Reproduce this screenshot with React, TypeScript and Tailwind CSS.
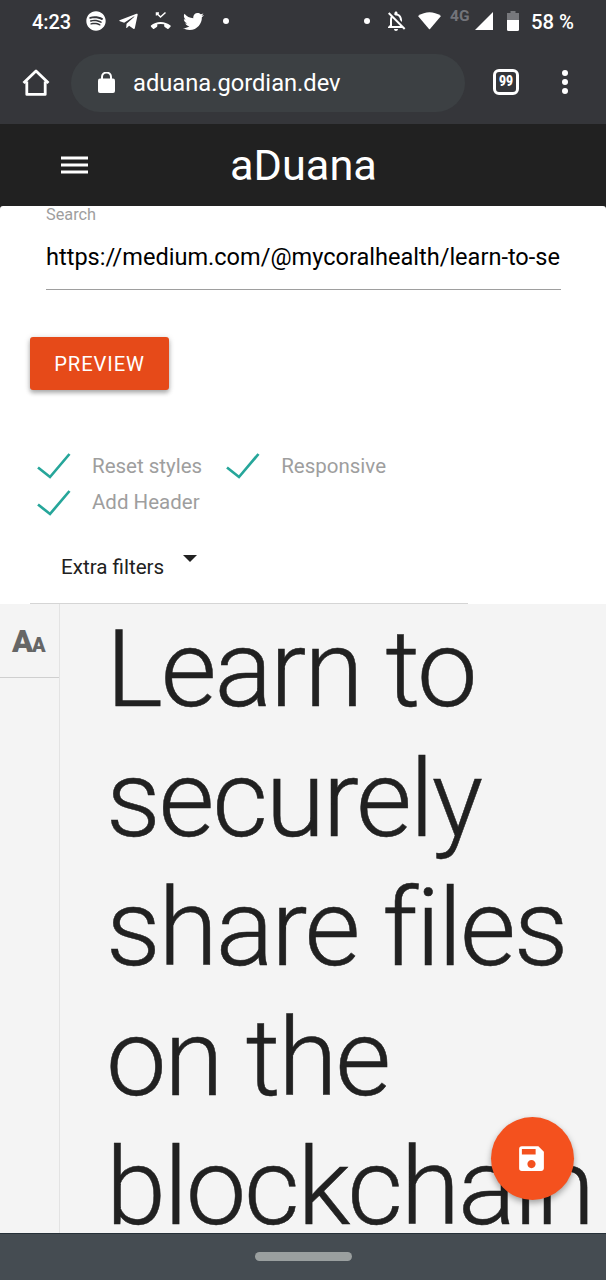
import type { ReactNode } from "react";
import { FaSpotify, FaTelegramPlane, FaTwitter } from "react-icons/fa";
import { MdOutlineNotificationsOff, MdSave } from "react-icons/md";

function StatusBar() {
  return (
    <div className="flex h-[42px] items-center text-[20px] leading-none font-medium whitespace-nowrap text-white">
      <span className="ml-8 w-[54px] translate-y-[0.5px] tracking-[-0.1px]">4:23</span>
      <FaSpotify className="size-5 shrink-0" />
      <FaTelegramPlane className="ml-3 size-[21px] shrink-0" />
      <svg className="ml-[11px] size-[22px] shrink-0" viewBox="0 0 22 22" fill="none">
        <path d="M6.500 5.500V3H9M6.500 3 10.500 7 15.500 2.500" stroke="currentColor" strokeWidth="1.500" />
        <path d="M1 15.600C6 10.800 15 10.800 20.500 15.600Q21 16.200 20.500 16.800L18.500 18.800Q17.900 19.200 17.300 18.800L14.700 17Q14.200 16.600 14.200 16V14.300Q10.700 13.500 7.300 14.300V16Q7.300 16.600 6.800 17L4.200 18.800Q3.600 19.200 3 18.800L1 16.800Q.5 16.200 1 15.600Z" fill="currentColor" />
      </svg>
      <FaTwitter className="ml-[11px] size-[21px] shrink-0" />
      <span className="ml-[19px] size-1.5 shrink-0 rounded-full bg-white" />
      <span className="ml-auto size-1.5 shrink-0 rounded-full bg-white" />
      <MdOutlineNotificationsOff className="ml-[14px] size-6 shrink-0" />
      <svg className="ml-[10px] h-[18px] w-[23px] shrink-0" viewBox="0 0 23 18" fill="currentColor">
        <path d="M0 4Q11.500-3.500 23 4L12 17Q11.500 17.500 11 17Z" />
      </svg>
      <span className="ml-[9px] w-[25px] -translate-y-1 text-[15.500px] font-bold text-[#73747a]">4G</span>
      <svg className="size-[18px] shrink-0" viewBox="0 0 18 18" fill="currentColor">
        <path d="M18 0V18H0Z" />
      </svg>
      <svg className="ml-[14px] h-5 w-3 shrink-0" viewBox="0 0 12 20">
        <path d="M3.500 0h5v2H12v8H0V2h3.500Z" fill="#77787c" />
        <path d="M0 9h12v9.500q0 1.500-1.500 1.500h-9Q0 20 0 18.500Z" fill="white" />
      </svg>
      <span className="mr-8 ml-3 w-[43px] translate-y-[0.5px] text-[20.300px]">58 %</span>
    </div>
  );
}

function AddressBar() {
  return (
    <div className="flex h-[82px] items-center text-white">
      <svg className="ml-[22px] size-7 shrink-0" viewBox="0 0 28 28" fill="none" stroke="currentColor" strokeWidth="2.800" strokeLinejoin="round">
        <path d="M1.500 14 14 2l12.500 12M4.800 12.500v12.900h18.400V12.500" />
      </svg>
      <div className="ml-[21px] flex h-[58px] w-[394px] items-center rounded-full bg-[#3c4043]">
        <svg className="ml-[27px] h-[22px] w-[17px] shrink-0" viewBox="0 0 17 22">
          <path d="M4 8V5a4.500 4.500 0 0 1 9 0V8" fill="none" stroke="white" strokeWidth="2" />
          <rect y="6.500" width="17" height="14.500" rx="2" fill="white" />
        </svg>
        <span className="ml-[18px] pt-[2px] text-[23.700px] leading-none">aduana.gordian.dev</span>
      </div>
      <span className="ml-7 flex size-[26px] -translate-y-px items-center justify-center rounded-[6px] border-[3px] border-white text-[15.500px] leading-none font-bold">
        <b className="scale-x-[0.78]">99</b>
      </span>
      <span className="ml-[43px] flex -translate-y-px flex-col gap-[3px]">
        <i className="size-1.5 rounded-full bg-white" />
        <i className="size-1.5 rounded-full bg-white" />
        <i className="size-1.5 rounded-full bg-white" />
      </span>
    </div>
  );
}

function Check({ children }: { children: ReactNode }) {
  return (
    <label className="flex h-[36.500px] items-center text-[20.500px] text-[#9e9e9e]">
      <svg className="mr-[21px] h-[26px] w-[34px] shrink-0" viewBox="0 0 34 26" fill="none" stroke="#26a69a" strokeWidth="2.700">
        <path d="M1 14.500 13 24 32.500 1" />
      </svg>
      {children}
    </label>
  );
}

function SearchForm() {
  return (
    <section className="flex h-[398px] flex-col rounded-t-[3px] bg-white">
      <label className="ml-[46px] h-[17px] text-[16.300px] leading-[17px] text-[#9e9e9e]">Search</label>
      <div className="ml-[46px] h-[67px] w-[515px] overflow-hidden border-b border-[#9e9e9e] text-[23.560px] leading-[68px] whitespace-nowrap text-black">
        https://medium.com/@mycoralhealth/learn-to-se
      </div>
      <button className="mt-[47px] ml-[30px] flex h-[53px] w-[139px] shrink-0 items-center justify-center rounded-[3px] bg-[#e64a19] pt-px text-[20.200px] tracking-[0.900px] text-white shadow-[0_3px_4px_rgba(0,0,0,0.25),0_1px_6px_rgba(0,0,0,0.16)]">
        PREVIEW
      </button>
      <div className="mt-[58px] ml-[37px] flex w-[420px] flex-wrap gap-x-[24px]">
        <Check>Reset styles</Check>
        <Check>Responsive</Check>
        <Check>Add Header</Check>
      </div>
      <div className="ml-[30px] flex w-[438px] flex-1 border-b border-[#d5d5d5] pl-[31px]">
        <span className="mt-[32px] h-7 w-[122px] text-[20.600px] leading-7 text-[#212121]">Extra filters</span>
        <svg className="mt-[34px] h-[7px] w-[14px]" viewBox="0 0 14 7">
          <path d="M0 0h14L7 7Z" fill="#212121" />
        </svg>
      </div>
    </section>
  );
}

function Preview() {
  return (
    <main className="flex h-[629px] overflow-hidden bg-[#f4f4f4]">
      <aside className="w-[60px] shrink-0 border-r border-[#e3e3e3]">
        <div className="flex h-[74px] items-baseline border-b border-[#cfcfcf] pt-[20px] pl-3 leading-none font-black text-[#666]">
          <span className="w-5 text-[31px] leading-[36px]">A</span>
          <span className="text-[20px] leading-none">A</span>
        </div>
      </aside>
      <h1 className="mt-[1px] ml-[46px] text-[108px] leading-[129.500px] font-light tracking-[-2.200px] whitespace-nowrap text-[#212121] [-webkit-text-stroke:0.5px_#212121]">
        Learn to<br />securely<br />share files<br />on the<br />blockchain
      </h1>
    </main>
  );
}

export default function App() {
  return (
    <div className="relative h-[1280px] w-[606px] overflow-hidden bg-[#212121] font-[Roboto,sans-serif]">
      <div className="h-[124px] bg-[#35363a]">
        <StatusBar />
        <AddressBar />
      </div>
      <header className="flex h-[82px] items-center bg-[#212121] text-white">
        <span className="ml-[61px] flex w-[27px] shrink-0 -translate-y-[0.5px] flex-col gap-[4px]">
          <i className="h-[3px] bg-white" />
          <i className="h-[3px] bg-white" />
          <i className="h-[3px] bg-white" />
        </span>
        <span className="ml-[142px] pt-[2px] text-[43.300px] leading-none">aDuana</span>
      </header>
      <SearchForm />
      <Preview />
      <footer className="flex h-[47px] justify-center border-t border-[#263038] bg-[#454c52] pt-[18px]">
        <span className="h-[9px] w-[97px] rounded-full bg-[#9a9f9f]" />
      </footer>
      <button className="absolute top-[1117px] left-[491px] flex size-[83px] items-center justify-center rounded-full bg-[#f4511e] text-white shadow-[0_3px_6px_rgba(0,0,0,0.35)]">
        <MdSave className="mr-0.5 size-[33px]" />
      </button>
    </div>
  );
}
